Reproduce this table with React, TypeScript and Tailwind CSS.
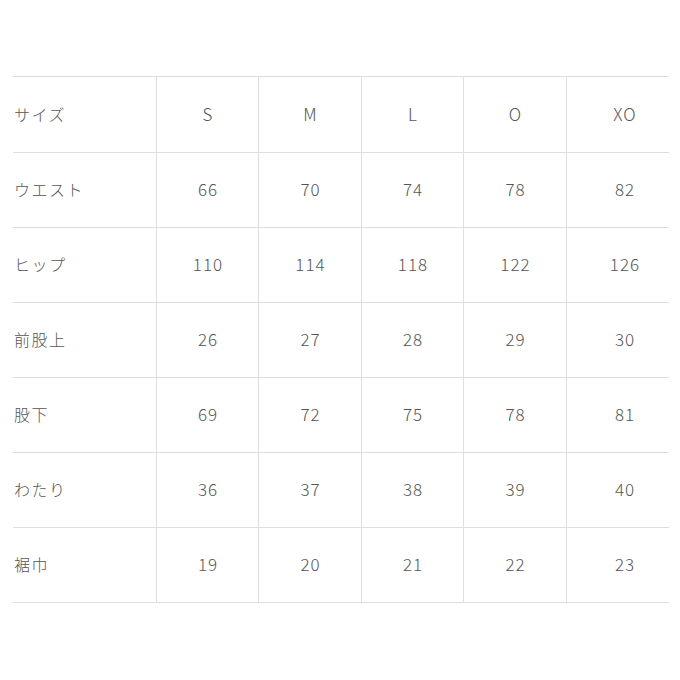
import React from "react";

const header = ["サイズ", "S", "M", "L", "O", "XO"];
const rows: string[][] = [
  ["ウエスト", "66", "70", "74", "78", "82"],
  ["ヒップ", "110", "114", "118", "122", "126"],
  ["前股上", "26", "27", "28", "29", "30"],
  ["股下", "69", "72", "75", "78", "81"],
  ["わたり", "36", "37", "38", "39", "40"],
  ["裾巾", "19", "20", "21", "22", "23"],
];

function Row({ cells, first }: { cells: string[]; first?: boolean }) {
  return (
    <div
      className={
        "grid grid-cols-[143px_102px_103px_102px_103px_103px] border-b border-[#dedede] " +
        (first ? "h-[76px]" : "h-[75px]")
      }
    >
      {cells.map((c, i) => (
        <div
          key={i}
          className={
            i === 0
              ? "flex items-center pl-[1px] pb-[2px] text-[16px] tracking-[1.5px]"
              : i === 5
              ? "flex items-center justify-center pb-[2px] pl-[14px] border-l border-[#dedede] text-[17px] tracking-[1px]"
              : "flex items-center justify-center pb-[2px] pl-[1px] border-l border-[#dedede] text-[17px] tracking-[1px]"
          }
        >
          {c}
        </div>
      ))}
    </div>
  );
}

export default function App() {
  return (
    <div
      className="w-[680px] h-[680px] bg-white pt-[76px] pl-[13px] text-[#555555]"
      style={{ fontFamily: '"Noto Sans CJK JP", "Noto Sans", sans-serif', fontWeight: 300 }}
    >
      <div className="w-[656px] border-t border-[#dedede]">
        <Row cells={header} first />
        {rows.map((r, i) => (
          <Row key={i} cells={r} />
        ))}
      </div>
    </div>
  );
}
